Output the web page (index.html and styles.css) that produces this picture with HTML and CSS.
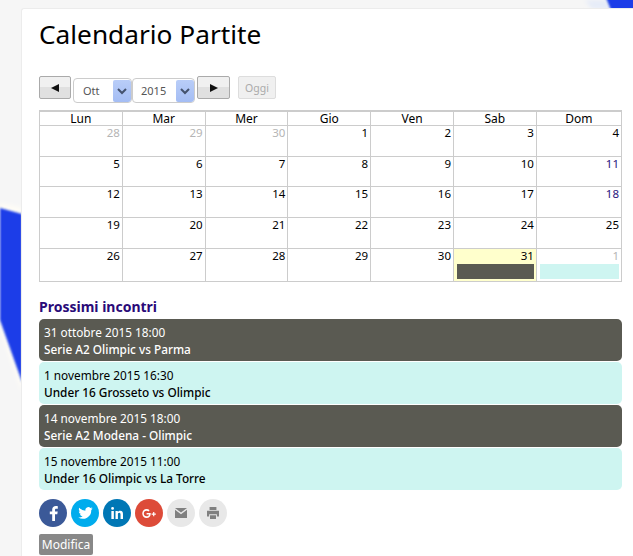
FILE: index.html
```html
<!DOCTYPE html>
<html lang="it">
<head>
<meta charset="utf-8">
<title>Calendario Partite</title>
<link rel="stylesheet" href="styles.css">
</head>
<body>
<svg class="backdrop" width="633" height="556" viewBox="0 0 633 556" aria-hidden="true">
  <defs><filter id="soft"><feGaussianBlur stdDeviation="0.8"/></filter><filter id="halo"><feGaussianBlur stdDeviation="2"/></filter></defs>
  <polygon points="0,203 22,208 22,392 0,328" fill="#fffdf6" filter="url(#halo)"/>
  <polygon points="0,208 22,214 22,382 0,320" fill="#1a3ee8" filter="url(#soft)"/>
  <polygon points="585,0 606,0 612,9 592,9" fill="#e6ecf8" filter="url(#halo)"/>
  <polygon points="606,-2 640,-2 640,10 611,10" fill="#1a3ee8" filter="url(#soft)"/>
</svg>
<main class="card">
  <h1 class="title">Calendario Partite</h1>
  <div class="toolbar">
    <button class="nav" type="button"><span class="tri tri-left"></span></button>
    <div class="select month"><span class="select-text">Ott</span><span class="select-arrow"><svg width="10" height="7" viewBox="0 0 10 7"><path d="M1 1l4 4 4-4" fill="none" stroke="#44526e" stroke-width="2"/></svg></span></div>
    <div class="select year"><span class="select-text">2015</span><span class="select-arrow"><svg width="10" height="7" viewBox="0 0 10 7"><path d="M1 1l4 4 4-4" fill="none" stroke="#44526e" stroke-width="2"/></svg></span></div>
    <button class="nav next-btn" type="button"><span class="tri tri-right"></span></button>
    <button class="today" type="button">Oggi</button>
  </div>
  <table class="cal">
    <colgroup><col class="day"><col class="day"><col class="day"><col class="day"><col class="day"><col class="day"><col></colgroup>
    <thead><tr><th>Lun</th><th>Mar</th><th>Mer</th><th>Gio</th><th>Ven</th><th>Sab</th><th>Dom</th></tr></thead>
    <tbody>
      <tr><td class="off">28</td><td class="off">29</td><td class="off">30</td><td>1</td><td>2</td><td>3</td><td>4</td></tr>
      <tr class="short"><td>5</td><td>6</td><td>7</td><td>8</td><td>9</td><td>10</td><td class="sun">11</td></tr>
      <tr><td>12</td><td>13</td><td>14</td><td>15</td><td>16</td><td>17</td><td class="sun">18</td></tr>
      <tr><td>19</td><td>20</td><td>21</td><td>22</td><td>23</td><td>24</td><td>25</td></tr>
      <tr class="last"><td>26</td><td>27</td><td>28</td><td>29</td><td>30</td><td class="now">31<div class="ev dark"></div></td><td class="off">1<div class="ev light"></div></td></tr>
    </tbody>
  </table>
  <h2 class="next">Prossimi incontri</h2>
  <ul class="matches">
    <li class="match dark"><span>31 ottobre 2015 18:00</span><strong>Serie A2 Olimpic vs Parma</strong></li>
    <li class="match light"><span>1 novembre 2015 16:30</span><strong>Under 16 Grosseto vs Olimpic</strong></li>
    <li class="match dark"><span>14 novembre 2015 18:00</span><strong>Serie A2 Modena - Olimpic</strong></li>
    <li class="match light"><span>15 novembre 2015 11:00</span><strong>Under 16 Olimpic vs La Torre</strong></li>
  </ul>
  <div class="share">
    <a class="soc fb"><svg width="9" height="15" viewBox="0 0 9 15"><path d="M6 15V8.300h2.300l.4-2.700H6V4c0-.8.300-1.300 1.400-1.300h1.400V.2C8.500.1 7.700 0 6.800 0 4.700 0 3.200 1.300 3.200 3.700v1.900H.8v2.700h2.400V15z" fill="#fff"/></svg></a>
    <a class="soc tw"><svg width="15" height="12" viewBox="0 0 18 15"><path d="M18 1.800c-.7.300-1.400.5-2.100.6.800-.5 1.300-1.200 1.600-2-.7.400-1.500.7-2.300.9A3.700 3.700 0 0 0 8.900 4.600 10.500 10.500 0 0 1 1.300.8 3.700 3.700 0 0 0 2.400 5.700c-.6 0-1.200-.2-1.700-.5 0 1.800 1.300 3.300 3 3.700-.5.100-1.100.2-1.700.1.500 1.500 1.800 2.500 3.400 2.500A7.400 7.400 0 0 1 0 13a10.500 10.500 0 0 0 16.200-9.300c.7-.5 1.300-1.200 1.800-1.900z" fill="#fff"/></svg></a>
    <a class="soc li"><svg width="12" height="12" viewBox="0 0 16 16"><path d="M.5 5.300h3.300V16H.5zM2.100 0a1.900 1.900 0 1 1 0 3.800A1.900 1.900 0 0 1 2.100 0zM6 5.300h3.100v1.500c.5-.9 1.600-1.700 3.200-1.700 3 0 3.700 2 3.700 4.600V16h-3.300v-5.500c0-1.200-.1-2.700-1.700-2.700s-1.800 1.200-1.800 2.600V16H6z" fill="#fff"/></svg></a>
    <a class="soc gp"><svg width="14" height="9" viewBox="0 0 18 12"><path d="M5.800 0C2.600 0 0 2.700 0 6s2.600 6 5.800 6c3.400 0 5.500-2.400 5.500-5.700 0-.4 0-.8-.1-1.100H5.800v2.100h3.300C8.900 8.600 7.700 9.700 5.800 9.700A3.700 3.700 0 0 1 5.800 2.300c1 0 1.800.4 2.400.9l1.600-1.600C8.700.6 7.400 0 5.800 0zM14.500 4v2H12.500v1.600h2v2h1.600v-2h2V6h-2V4z" fill="#fff"/></svg></a>
    <a class="soc mail"><svg width="12" height="10" viewBox="0 0 12 10"><path d="M0 0h12L6 4.500zM0 1.800V10h12V1.800L6 6.300z" fill="#808080"/></svg></a>
    <a class="soc print"><svg width="12" height="12" viewBox="0 0 14 14"><path d="M3 0h8v3.500H3zM0 4.500h14V11h-2.500V8.500h-9V11H0zM3.500 9.500h7V14h-7z" fill="#808080"/></svg></a>
  </div>
  <button class="edit" type="button">Modifica</button>
</main>
</body>
</html>
```
FILE: styles.css
```css
html, body { margin: 0; padding: 0; }
body {
  width: 633px;
  height: 556px;
  overflow: hidden;
  background: #f6f6f6;
  font-family: "Noto Sans", sans-serif;
  color: #000;
  position: relative;
}
.backdrop { position: absolute; left: 0; top: 0; }
.card {
  position: relative;
  margin: 8px 0 0 21px;
  width: 612px;
  height: 548px;
  box-sizing: border-box;
  padding: 0 11px 0 17px;
  background: #fff;
  border: 1px solid #ececec;
  border-right: 0;
  border-bottom: 0;
  border-radius: 3px 0 0 0;
}
.title { margin: 0; padding-top: 8px; height: 59px; box-sizing: content-box; font-size: 26.250px; line-height: 35px; font-weight: 400; }
.toolbar { display: flex; align-items: flex-start; height: 34px; }
.nav {
  width: 32px; height: 23px; padding: 0;
  display: flex; align-items: center; justify-content: center;
  border: 1px solid #aaa; border-radius: 2px;
  background: linear-gradient(#f0f0f0 50%, #e0e0e0 50%);
}
.next-btn { width: 33px; }
.tri { display: block; width: 0; height: 0; border-top: 4px solid transparent; border-bottom: 4px solid transparent; }
.tri-left { border-right: 8px solid #111; }
.tri-right { border-left: 8px solid #111; }
.select {
  display: flex; margin-top: 2px; height: 25px; box-sizing: border-box;
  border: 1px solid #ccc; border-radius: 4px; background: #fff; overflow: hidden;
}
.month { width: 59px; margin-left: 2px; }
.year { width: 63px; margin-right: 2px; }
.select-text { flex: 1; font-size: 11px; line-height: 23px; padding-left: 9px; color: #555; }
.year .select-text { padding-left: 8px; }
.select-arrow {
  width: 18px; margin: 1px 0 0; display: flex; align-items: center; justify-content: center;
  background: linear-gradient(#b9cdf8, #a4bdf4); border-radius: 2px;
}
.today {
  margin-left: 8px; width: 38px; height: 23px; padding: 0;
  border: 1px solid #ddd; border-radius: 2px; background: #f0f0f0; color: #aaa;
  font: 10.500px "Noto Sans", sans-serif;
}
.cal { width: 583px; border-collapse: collapse; table-layout: fixed; border-top: 2px solid #ccc; }
.day { width: 82.800px; }
.cal th, .cal td { border: 1px solid #ccc; padding: 0 2px; font-size: 11.500px; }
.cal th { height: 13px; line-height: 13px; font-size: 12px; font-weight: 400; text-align: center; }
.cal td { height: 30px; line-height: 13px; text-align: right; vertical-align: top; padding: 0 2px; }
.cal .short td { height: 29px; }
.cal .last td { height: 32px; }
.cal .off { color: #b5b5b5; }
.cal .sun { color: #2a1580; }
.cal .now { background: #ffffcc; }
.ev { height: 15px; margin: 2px 0 0 1px; }
.dark { background: #5a5a52; color: #fff; }
.light { background: #cef5f1; color: #000; }
.next { margin: 16px 0 3px; font-size: 14px; line-height: 18px; font-weight: 700; color: #2a0a78; }
.matches { list-style: none; margin: 0; padding: 0; width: 583px; display: flex; flex-direction: column; gap: 1px; }
.match { height: 42px; box-sizing: border-box; padding: 5px 5px 0; border-radius: 5px; font-size: 11.800px; line-height: 17px; }
.match span, .match strong { display: block; white-space: nowrap; }
.match strong { font-weight: 500; }
.share { display: flex; gap: 4px; margin-top: 9px; }
.soc { width: 28px; height: 28px; border-radius: 50%; display: flex; align-items: center; justify-content: center; }
.fb { background: #3b5998; }
.tw { background: #00aced; }
.li { background: #0077b5; }
.gp { background: #dd4b39; }
.mail, .print { background: #e8e8e8; }
.edit {
  display: block; margin-top: 7px; width: 54px; height: 21px; padding: 0;
  border: 0; border-radius: 2px; background: #888; color: #fff;
  font: 12px "Noto Sans", sans-serif;
}
```
